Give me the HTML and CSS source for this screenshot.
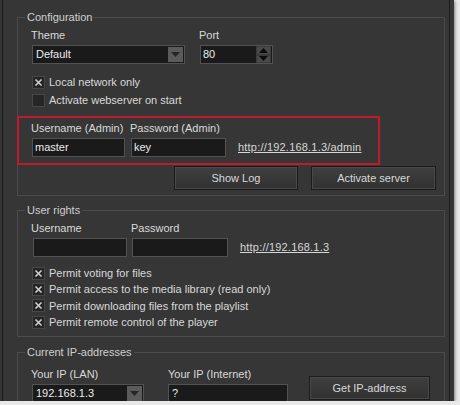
FILE: index.html
```html
<!DOCTYPE html>
<html>
<head>
<meta charset="utf-8">
<link rel="stylesheet" href="styles.css">
</head>
<body>
<div class="window">
  <div class="frame">
    <div class="group config">
      <span class="group-title">Configuration</span>
      <div class="row">
        <div class="field">
          <span class="label">Theme</span>
          <div class="combo theme-combo">
            <span class="value">Default</span>
            <span class="combo-btn"><svg width="9" height="5" viewBox="0 0 9 5"><polygon points="0,0 9,0 4.5,5" fill="#262626"/></svg></span>
          </div>
        </div>
        <div class="field port-field">
          <span class="label">Port</span>
          <div class="spin">
            <span class="value">80</span>
            <span class="spin-btns">
              <span class="spin-btn"><svg width="9" height="5" viewBox="0 0 9 5"><polygon points="0,5 9,5 4.5,0" fill="#0c0c0c"/></svg></span>
              <span class="spin-btn"><svg width="9" height="5" viewBox="0 0 9 5"><polygon points="0,0 9,0 4.5,5" fill="#0c0c0c"/></svg></span>
            </span>
          </div>
        </div>
      </div>
      <div class="checks config-checks">
        <div class="check"><span class="box"><svg width="9" height="9" viewBox="0 0 9 9"><path d="M1.5 1.5 L7.5 7.5 M7.5 1.5 L1.5 7.5" stroke="#cfcfcf" stroke-width="1.6"/></svg></span>Local network only</div>
        <div class="check"><span class="box"></span>Activate webserver on start</div>
      </div>
      <div class="admin-box">
        <div class="row align-end">
          <div class="field">
            <span class="label">Username (Admin)</span>
            <div class="input admin-user">master</div>
          </div>
          <div class="field">
            <span class="label">Password (Admin)</span>
            <div class="input admin-pass">key</div>
          </div>
          <a class="link admin-link">http://192.168.1.3/admin</a>
        </div>
      </div>
      <div class="buttons">
        <div class="btn show-log">Show Log</div>
        <div class="btn activate">Activate server</div>
      </div>
    </div>

    <div class="group rights">
      <span class="group-title">User rights</span>
      <div class="row align-end">
        <div class="field">
          <span class="label">Username</span>
          <div class="input user-input"></div>
        </div>
        <div class="field">
          <span class="label">Password</span>
          <div class="input pass-input"></div>
        </div>
        <a class="link user-link">http://192.168.1.3</a>
      </div>
      <div class="checks rights-checks">
        <div class="check small"><span class="box"><svg width="9" height="9" viewBox="0 0 9 9"><path d="M1.5 1.5 L7.5 7.5 M7.5 1.5 L1.5 7.5" stroke="#cfcfcf" stroke-width="1.6"/></svg></span>Permit voting for files</div>
        <div class="check small"><span class="box"><svg width="9" height="9" viewBox="0 0 9 9"><path d="M1.5 1.5 L7.5 7.5 M7.5 1.5 L1.5 7.5" stroke="#cfcfcf" stroke-width="1.6"/></svg></span>Permit access to the media library (read only)</div>
        <div class="check small"><span class="box"><svg width="9" height="9" viewBox="0 0 9 9"><path d="M1.5 1.5 L7.5 7.5 M7.5 1.5 L1.5 7.5" stroke="#cfcfcf" stroke-width="1.6"/></svg></span>Permit downloading files from the playlist</div>
        <div class="check small"><span class="box"><svg width="9" height="9" viewBox="0 0 9 9"><path d="M1.5 1.5 L7.5 7.5 M7.5 1.5 L1.5 7.5" stroke="#cfcfcf" stroke-width="1.6"/></svg></span>Permit remote control of the player</div>
      </div>
    </div>

    <div class="group ips">
      <span class="group-title">Current IP-addresses</span>
      <div class="row">
        <div class="field">
          <span class="label">Your IP (LAN)</span>
          <div class="combo lan-combo">
            <span class="value">192.168.1.3</span>
            <span class="combo-btn"><svg width="9" height="5" viewBox="0 0 9 5"><polygon points="0,0 9,0 4.5,5" fill="#262626"/></svg></span>
          </div>
        </div>
        <div class="field inet-field">
          <span class="label">Your IP (Internet)</span>
          <div class="input inet-input">?</div>
        </div>
        <div class="btn get-ip">Get IP-address</div>
      </div>
    </div>
  </div>
</div>
</body>
</html>
```

FILE: styles.css
```css
* { box-sizing: border-box; }

body {
  margin: 0;
  background: #e8e8e8;
  font-family: "Liberation Sans", Arial, sans-serif;
  font-size: 11px;
  color: #d9d9d9;
}

.window {
  width: 454px;
  height: 401px;
  background: #363636;
  padding-left: 2px;
  overflow: hidden;
  box-shadow: 1px 1px 3px rgba(0, 0, 0, 0.45);
}

.frame {
  width: 448px;
  height: 100%;
  border-left: 1px solid #1c1c1c;
  border-right: 1px solid #1c1c1c;
  padding: 17px 4px 0 14px;
}

.group {
  position: relative;
  border: 1px solid #4b4b4b;
  padding: 11px 0 0 13px;
}

.group-title {
  position: absolute;
  top: -7px;
  left: 7px;
  padding: 0 2px;
  line-height: 13px;
  background: #363636;
  color: #cfcfcf;
}

.config { padding-bottom: 5px; }
.rights { margin-top: 14px; padding-bottom: 6px; }
.ips { margin-top: 15px; padding-top: 15px; height: 80px; }

.row { display: flex; }
.align-end { align-items: flex-end; }

.field {
  display: flex;
  flex-direction: column;
  gap: 3px;
}

.label {
  line-height: 13px;
}

.input, .combo, .spin {
  height: 19px;
  background: #1a1a1a;
  border: 1px solid #525252;
  color: #ebebeb;
  line-height: 17px;
  padding-left: 2px;
  margin-left: 1px;
}

.combo, .spin {
  display: flex;
  justify-content: space-between;
}

.combo .value { padding-left: 1px; }

.combo-btn {
  width: 15px;
  height: 15px;
  margin: 1px 1px 0 0;
  background: #5b5b5b;
  display: flex;
  align-items: center;
  justify-content: center;
}

.theme-combo { width: 153px; }
.port-field { margin-left: 14px; }
.spin { width: 73px; }

.spin-btns {
  display: flex;
  flex-direction: column;
  width: 15px;
  margin: 0 1px 0 0;
}

.spin-btn {
  height: 8.5px;
  background: #4a4a4a;
  border: 1px solid #3a3a3a;
  display: flex;
  align-items: center;
  justify-content: center;
}

.checks { display: flex; flex-direction: column; }
.config-checks { margin-top: 9px; }
.rights-checks { margin-top: 8px; }

.check {
  display: flex;
  align-items: center;
  gap: 4px;
  height: 18px;
  padding-left: 1px;
}

.check.small { height: 16.33px; }

.box {
  width: 13px;
  height: 13px;
  background: #262626;
  border: 1px solid #474747;
  display: flex;
  align-items: center;
  justify-content: center;
}

.admin-box {
  margin: 7px 0 0 -14px;
  width: 363px;
  border: 2px solid #bf1a2d;
  padding: 4px 0 6px 12px;
}

.admin-user { width: 93px; }
.admin-pass { width: 95px; }
.admin-box .field + .field { margin-left: 5px; }

.link {
  color: #d6d6d6;
  text-decoration: underline;
  line-height: 19px;
  height: 19px;
  margin-left: 12px;
  letter-spacing: 0.2px;
}

.buttons {
  display: flex;
  justify-content: flex-end;
  gap: 13px;
  margin: 1px 8px 0 0;
}

.btn {
  height: 24px;
  line-height: 22px;
  text-align: center;
  color: #d8d8d8;
  background: linear-gradient(#3f3f3f, #313131);
  border: 1px solid #1b1b1b;
  box-shadow: inset 0 0 0 1px #494949;
}

.show-log { width: 124px; }
.activate { width: 125px; }

.user-input { width: 94px; margin-left: 2px; }
.pass-input { width: 96px; }
.rights .field + .field { margin-left: 4px; }
.user-link { margin-left: 12px; }

.lan-combo { width: 112px; }
.inet-field { margin-left: 24px; }
.inet-input { width: 120px; margin-left: 0; padding-left: 3px; }

.get-ip {
  width: 121px;
  margin: 8px 0 0 21px;
  align-self: flex-start;
}
```
